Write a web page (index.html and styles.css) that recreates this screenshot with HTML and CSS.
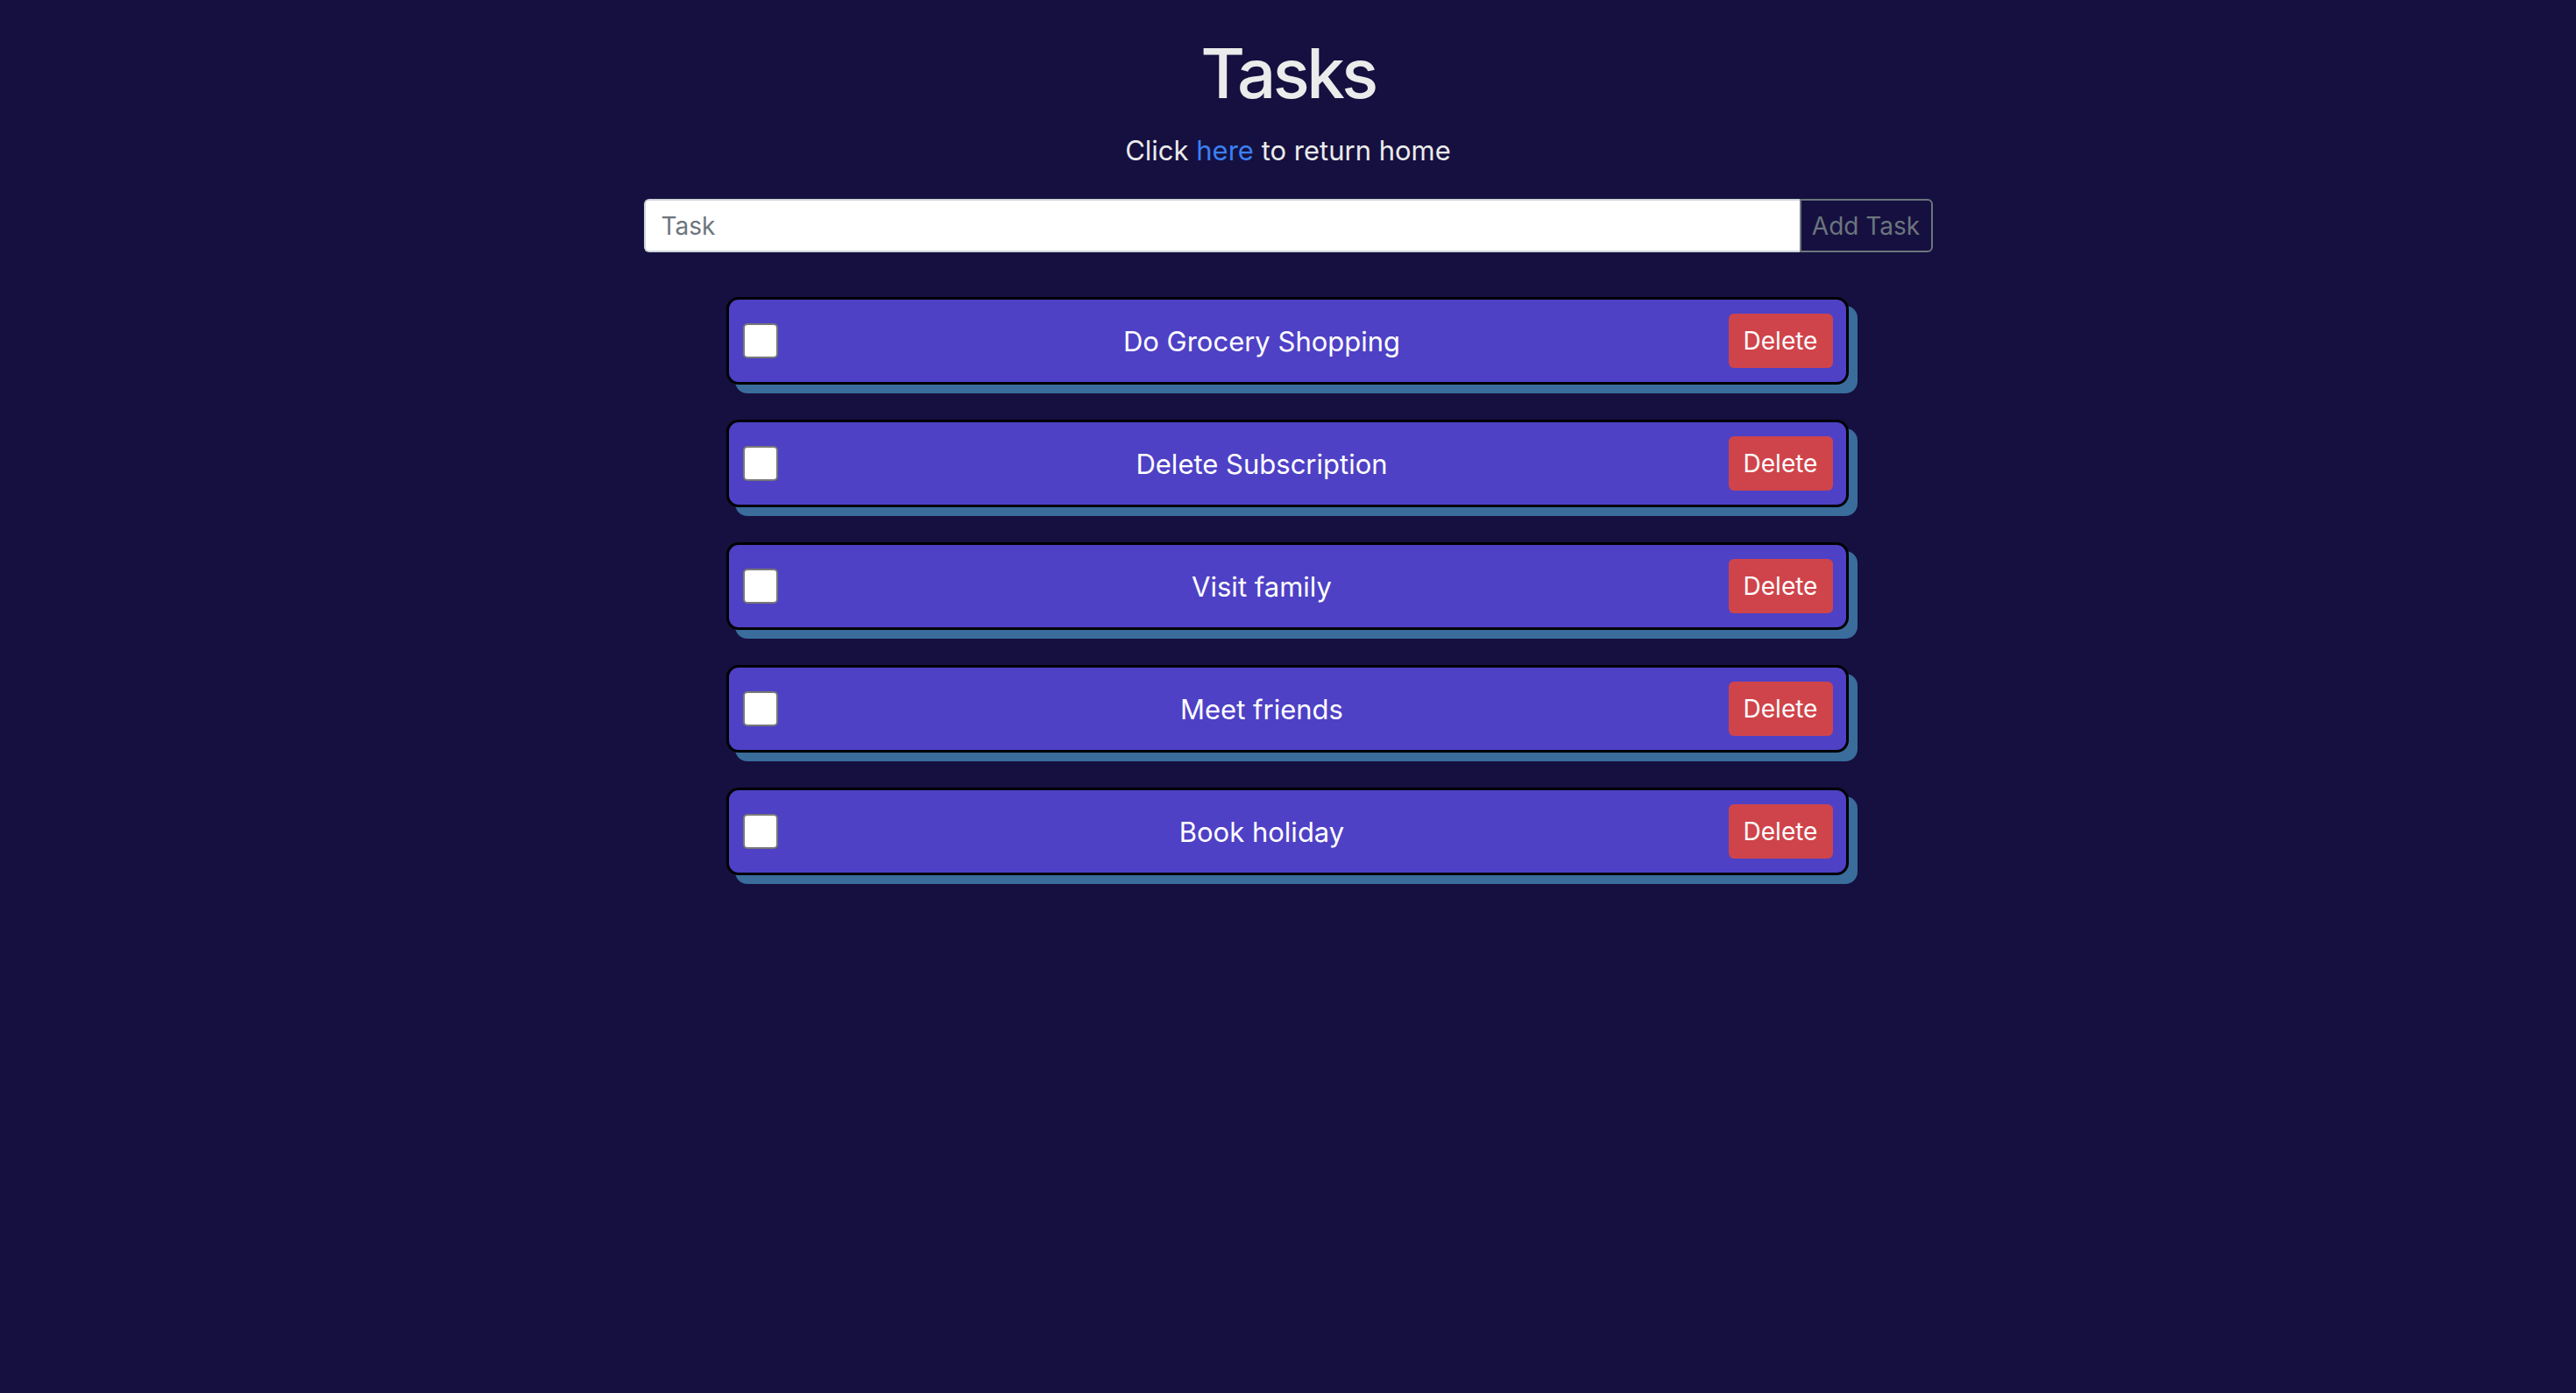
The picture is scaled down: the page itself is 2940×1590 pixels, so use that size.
FILE: index.html
```html
<!DOCTYPE html>
<html lang="en">
<head>
<meta charset="utf-8">
<title>Tasks</title>
<link rel="stylesheet" href="styles.css">
</head>
<body>
<main class="page">
  <h1 class="title">Tasks</h1>
  <p class="subtitle">Click <a href="#" class="link">here</a> to return home</p>
  <form class="input-group">
    <input class="task-input" type="text" placeholder="Task">
    <button class="add-btn" type="button">Add Task</button>
  </form>
  <ul class="task-list">
    <li class="task-card"><input class="check" type="checkbox"><span class="task-text">Do Grocery Shopping</span><button class="delete-btn" type="button">Delete</button></li>
    <li class="task-card"><input class="check" type="checkbox"><span class="task-text">Delete Subscription</span><button class="delete-btn" type="button">Delete</button></li>
    <li class="task-card"><input class="check" type="checkbox"><span class="task-text">Visit family</span><button class="delete-btn" type="button">Delete</button></li>
    <li class="task-card"><input class="check" type="checkbox"><span class="task-text">Meet friends</span><button class="delete-btn" type="button">Delete</button></li>
    <li class="task-card"><input class="check" type="checkbox"><span class="task-text">Book holiday</span><button class="delete-btn" type="button">Delete</button></li>
  </ul>
</main>
</body>
</html>
```
FILE: styles.css
```css
html, body {
  margin: 0;
  padding: 0;
}
body {
  background: #151040;
  font-family: Inter, "Noto Sans", sans-serif;
  color: #ffffff;
  min-height: 1590px;
}
.page {
  display: flex;
  flex-direction: column;
  align-items: center;
  padding-top: 37px;
}
.title {
  margin: 0;
  font-size: 78px;
  font-weight: 500;
  line-height: 1.2;
  color: #ebebeb;
  letter-spacing: -3.5px;
}
.subtitle {
  margin: 18px 0 0;
  font-size: 31px;
  line-height: 1.5;
  color: #ebebeb;
}
.link {
  color: #3a80f4;
  text-decoration: none;
}
.input-group {
  display: flex;
  width: 1471px;
  margin-top: 32px;
  height: 61px;
}
.task-input {
  flex: 1;
  margin: 0;
  height: 61px;
  box-sizing: border-box;
  border: 2px solid #ced4da;
  border-right: none;
  border-radius: 6px 0 0 6px;
  padding: 0 18px;
  font-family: Inter, "Noto Sans", sans-serif;
  font-size: 28px;
  color: #212529;
  background: #ffffff;
  outline: none;
}
.task-input::placeholder {
  color: #6c757d;
}
.add-btn {
  margin: 0;
  height: 61px;
  box-sizing: border-box;
  width: 152px;
  border: 2px solid #6c757d;
  border-radius: 0 6px 6px 0;
  background: transparent;
  color: #6c757d;
  font-family: Inter, "Noto Sans", sans-serif;
  font-size: 28px;
  padding: 0;
}
.task-list {
  list-style: none;
  margin: 51px 0 0;
  padding: 0;
  display: flex;
  flex-direction: column;
  gap: 40px;
  width: 1281px;
  transform: translateX(-1px);
}
.task-card {
  display: flex;
  align-items: center;
  box-sizing: border-box;
  height: 100px;
  border: 3px solid #000000;
  border-radius: 14px;
  background: #4e41c5;
  box-shadow: 10px 10px 0 0 #3a6c9c;
  padding: 0 15px 0 16px;
}
.check {
  appearance: none;
  -webkit-appearance: none;
  margin: 0;
  width: 40px;
  height: 40px;
  box-sizing: border-box;
  border: 2px solid #777777;
  border-radius: 5px;
  background: #ffffff;
  flex: none;
}
.task-text {
  flex: 1;
  text-align: center;
  font-size: 31px;
  margin-left: 20px;
  color: #ffffff;
}
.delete-btn {
  flex: none;
  width: 119px;
  height: 62px;
  border: none;
  border-radius: 6px;
  background: #cf444b;
  color: #ffffff;
  font-family: Inter, "Noto Sans", sans-serif;
  font-size: 28px;
  padding: 0;
}
```
